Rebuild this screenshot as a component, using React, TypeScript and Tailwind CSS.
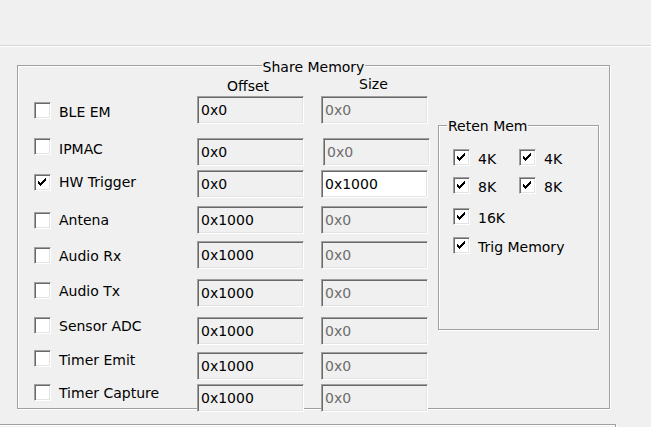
const SUNKEN =
  "border border-t-[#a0a0a0] border-l-[#a0a0a0] border-r-white border-b-white shadow-[inset_1px_1px_0_#696969,inset_-1px_-1px_0_#e3e3e3]";
const ETCHED = "border border-[#a0a0a0] shadow-[inset_1px_1px_0_#fff,1px_1px_0_#fff]";

type Row = {
  label: string;
  checked?: boolean;
  offset: string;
  size: string;
  sizeOn?: boolean;
  gap: string; // space above the row
  cb: string; // checkbox nudge
  lb: string; // label nudge
  sizeGap: string;
};

const rows: Row[] = [
  { label: "BLE EM", offset: "0x0", size: "0x0", gap: "mt-0", cb: "mt-[6px]", lb: "mt-[8px]", sizeGap: "ml-[17px]" },
  { label: "IPMAC", offset: "0x0", size: "0x0", gap: "mt-[14px]", cb: "mt-0", lb: "mt-[3px]", sizeGap: "ml-[19px]" },
  { label: "HW Trigger", checked: true, offset: "0x0", size: "0x1000", sizeOn: true, gap: "mt-[4px]", cb: "mt-[4px]", lb: "mt-[4px]", sizeGap: "ml-[17px]" },
  { label: "Antena", offset: "0x1000", size: "0x0", gap: "mt-[8px]", cb: "mt-[6px]", lb: "mt-[6px]", sizeGap: "ml-[17px]" },
  { label: "Audio Rx", offset: "0x1000", size: "0x0", gap: "mt-[7px]", cb: "mt-[6px]", lb: "mt-[7px]", sizeGap: "ml-[17px]" },
  { label: "Audio Tx", offset: "0x1000", size: "0x0", gap: "mt-[10px]", cb: "mt-[3px]", lb: "mt-[4px]", sizeGap: "ml-[17px]" },
  { label: "Sensor ADC", offset: "0x1000", size: "0x0", gap: "mt-[10px]", cb: "mt-0", lb: "mt-[1px]", sizeGap: "ml-[17px]" },
  { label: "Timer Emit", offset: "0x1000", size: "0x0", gap: "mt-[7px]", cb: "-mt-[2px]", lb: "mt-0", sizeGap: "ml-[17px]" },
  { label: "Timer Capture", offset: "0x1000", size: "0x0", gap: "mt-[4px]", cb: "mt-0", lb: "mt-[1px]", sizeGap: "ml-[17px]" },
];

function Check() {
  // classic check glyph, drawn pixel column by column
  return (
    <svg width="8" height="8" viewBox="0 0 8 8" shapeRendering="crispEdges" className="-ml-px -mt-px">
      <path
        fill="#000"
        d="M0 3h1v3h-1zM1 4h1v3h-1zM2 5h1v3h-1zM3 4h1v3h-1zM4 3h1v3h-1zM5 2h1v3h-1zM6 1h1v3h-1zM7 0h1v3h-1z"
      />
    </svg>
  );
}

function Box({ checked, className = "" }: { checked?: boolean; className?: string }) {
  return (
    <span className={`flex h-[17px] w-[17px] shrink-0 items-center justify-center bg-white ${SUNKEN} ${className}`}>
      {checked && <Check />}
    </span>
  );
}

function Edit({ value, on, dim, className = "" }: { value: string; on?: boolean; dim?: boolean; className?: string }) {
  return (
    <div
      className={`flex h-[28px] w-[107px] shrink-0 items-center pl-[3px] ${SUNKEN} ${
        on ? "bg-white" : "bg-[#f0f0f0]"
      } ${dim ? "text-[#6d6d6d]" : "text-black"} ${className}`}
    >
      {value}
    </div>
  );
}

function RetenItem({ label, className = "" }: { label: string; className?: string }) {
  return (
    <div className={`flex h-[17px] items-start ${className}`}>
      <Box checked />
      <span className="ml-[8px] mt-[2px] whitespace-nowrap">{label}</span>
    </div>
  );
}

export default function App() {
  return (
    <div className="flex h-[427px] w-[651px] flex-col overflow-hidden bg-[#f0f0f0] font-['DejaVu_Sans',sans-serif] text-[14px] leading-[17px] text-black">
      <div className="h-[45px] shrink-0" />
      <div className="h-px shrink-0 bg-[#d5d5d5]" />
      <div className="h-px shrink-0 bg-white" />

      {/* Share Memory */}
      <div className={`relative ml-[17px] mt-[18px] h-[344px] w-[593px] shrink-0 ${ETCHED}`}>
        <span className="absolute -top-[7px] left-1/2 -translate-x-1/2 whitespace-nowrap bg-[#f0f0f0] px-[1px]">
          Share Memory
        </span>

        <div className="flex">
          <div className="flex w-[410px] shrink-0 flex-col">
            <div className="flex h-[30px] items-start">
              <span className="ml-[209px] mt-[12px] w-[132px]">Offset</span>
              <span className="mt-[10px]">Size</span>
            </div>

            {rows.map((r) => (
              <div key={r.label} className={`flex h-[28px] items-start ${r.gap}`}>
                <div className="flex w-[179px] shrink-0 items-start">
                  <Box checked={r.checked} className={`ml-[16px] ${r.cb}`} />
                  <span className={`ml-[8px] whitespace-nowrap ${r.lb}`}>{r.label}</span>
                </div>
                <Edit value={r.offset} />
                <Edit value={r.size} on={r.sizeOn} dim={!r.sizeOn} className={r.sizeGap} />
              </div>
            ))}
          </div>

          {/* Reten Mem */}
          <div className={`relative ml-[10px] mt-[59px] h-[205px] w-[161px] shrink-0 ${ETCHED}`}>
            <span className="absolute -top-[8px] left-[8px] whitespace-nowrap bg-[#f0f0f0] px-[1px]">Reten Mem</span>
            <div className="flex flex-col">
              <div className="mt-[23px] flex">
                <RetenItem label="4K" className="ml-[14px] w-[66px]" />
                <RetenItem label="4K" />
              </div>
              <div className="mt-[11px] flex">
                <RetenItem label="8K" className="ml-[14px] w-[66px]" />
                <RetenItem label="8K" />
              </div>
              <RetenItem label="16K" className="ml-[14px] mt-[14px]" />
              <RetenItem label="Trig Memory" className="ml-[14px] mt-[12px]" />
            </div>
          </div>
        </div>
      </div>

      <div className={`-ml-[2px] mt-[15px] h-[30px] w-[618px] shrink-0 ${ETCHED}`} />
    </div>
  );
}
